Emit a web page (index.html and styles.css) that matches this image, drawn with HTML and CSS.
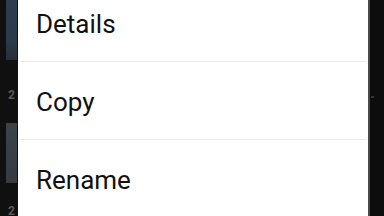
FILE: index.html
```html
<!DOCTYPE html>
<html>
<head>
<meta charset="utf-8">
<link rel="stylesheet" href="styles.css">
</head>
<body>
<div class="screen">
  <div class="side-left">
    <div class="thumb thumb-blue"></div>
    <div class="count">2</div>
    <div class="thumb thumb-grey"></div>
    <div class="count count-last">2</div>
  </div>
  <div class="dialog">
    <ul class="menu">
      <li class="item">Details</li>
      <li class="item">Copy</li>
      <li class="item">Rename</li>
    </ul>
  </div>
  <div class="side-right"><span class="dot"></span></div>
</div>
</body>
</html>
```

FILE: styles.css
```css
html, body {
  margin: 0;
  padding: 0;
  background: #111111;
  overflow: hidden;
}
.screen {
  display: flex;
  width: 384px;
  height: 216px;
  overflow: hidden;
}
.side-left {
  width: 18px;
  flex: none;
  background: #101010;
  display: flex;
  flex-direction: column;
  padding-left: 6px;
  box-sizing: border-box;
}
.thumb {
  width: 11px;
  flex: none;
}
.thumb-blue {
  height: 60px;
  background: linear-gradient(180deg, #2b3d50 0%, #2a3a4a 70%, #26303a 100%);
}
.thumb-grey {
  height: 60px;
  margin-top: 22px;
  background: linear-gradient(180deg, #3c4348 0%, #353b40 100%);
}
.count {
  margin-top: 29px;
  font-family: Roboto, "Liberation Sans", sans-serif;
  font-weight: 700;
  font-size: 12px;
  line-height: 12px;
  color: #5a5a5a;
  padding-left: 2px;
}
.count-last {
  margin-top: 22px;
}
.dialog {
  width: 350px;
  flex: none;
  background: #ffffff;
  overflow: hidden;
}
.menu {
  list-style: none;
  margin: -16px 0 0 0;
  padding: 0 2px 0 2px;
}
.item {
  height: 74px;
  border-bottom: 1px solid #e9e9e9;
  display: flex;
  align-items: center;
  padding-left: 16px;
  padding-top: 3px;
  box-sizing: content-box;
  font-family: Roboto, "Liberation Sans", sans-serif;
  font-size: 26px;
  color: #111111;
}
.side-right {
  width: 16px;
  flex: none;
  background: #0d0d0d;
  border-left: 2px solid #4a4a4a;
  box-sizing: border-box;
  position: relative;
}
.dot {
  position: absolute;
  left: 1px;
  top: 96px;
  width: 3px;
  height: 2px;
  background: #333;
}
```
